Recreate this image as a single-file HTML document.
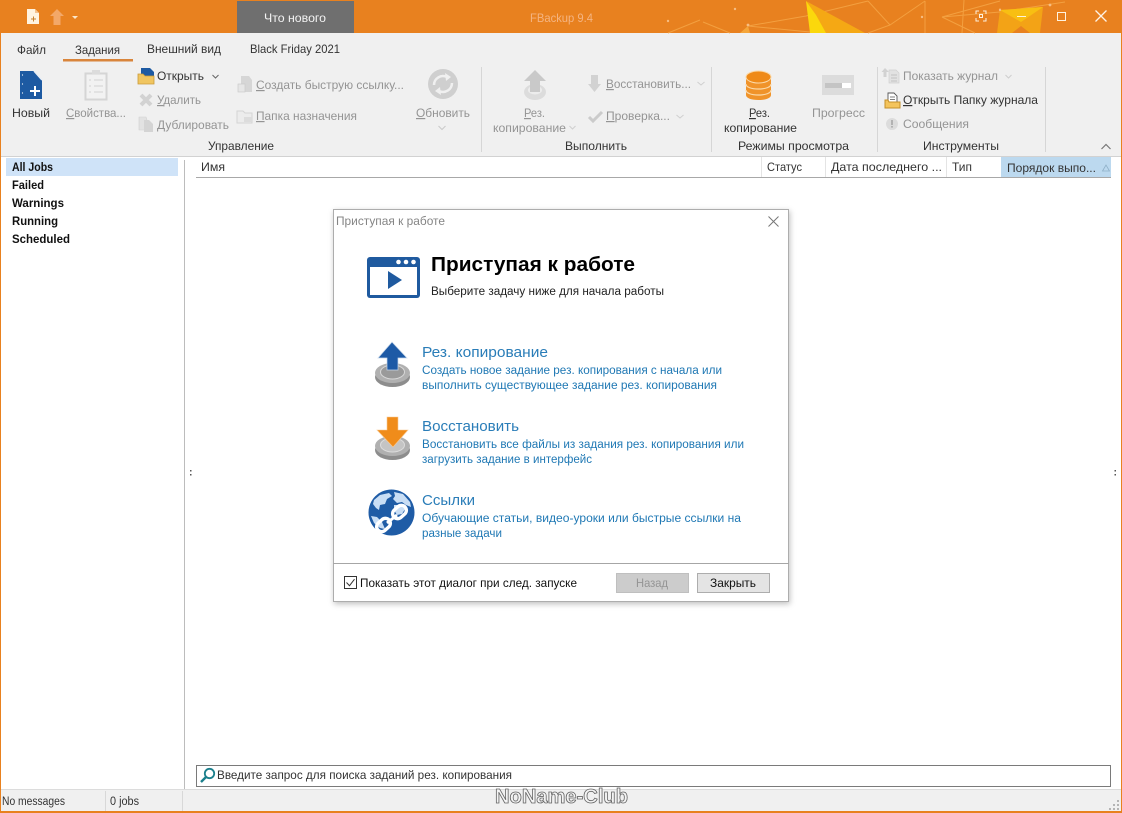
<!DOCTYPE html>
<html lang="ru"><head><meta charset="utf-8"><title>FBackup 9.4</title>
<style>
html,body{margin:0;padding:0;background:#fff;overflow:hidden}
svg{display:block}
text{font-family:"Liberation Sans","Noto Sans CJK SC",sans-serif;font-size:12px;fill:#333;white-space:pre}
.g{fill:#949494}
.b{font-weight:bold;fill:#111}
.l{fill:#1f78b4}
.h{font-size:15px;fill:#2a7db8}
.u{text-decoration:underline}
</style></head><body>
<svg xmlns="http://www.w3.org/2000/svg" width="1122" height="813" viewBox="0 0 1122 813">
<!-- frame -->
<rect width="1122" height="813" fill="#e8811f"/>
<rect x="1" y="33" width="1120" height="778" fill="#fff"/>
<rect x="1" y="33" width="1120" height="124" fill="#f0f0f0"/>
<rect x="1" y="156" width="1120" height="1" fill="#d2d2d2"/>
<!-- titlebar decoration -->
<g fill="none" stroke="#f3a040" stroke-width="1">
<path d="M703 22L730 33M748 26L806 16L868 1M748 26L810 32M868 1L890 25L925 1M890 25L868 33M925 1L925 33M942 17L1000 1M942 17L1000 12L1065 2M942 17L975 33M700 20L668 33M1000 8L1000 33M964 0L962 33"/>
</g>
<polygon points="806,1 814,33 865,33" fill="#f5a814"/>
<polygon points="806,1 810,33 826,33 816,15" fill="#fbd80c"/>
<polygon points="740,33 748,26 750,33" fill="#f5a63a"/>
<polygon points="1000,10 1043,7 1040,33 1030,33 1021,26 1012,33 997,33" fill="#f3a316"/>
<polygon points="1000,10 1043,7 1021,22" fill="#f8bf12"/>
<g fill="#f6bd82"><circle cx="735" cy="9" r="1.200"/><circle cx="748" cy="25" r="1.400"/><circle cx="668" cy="21" r="1.200"/><circle cx="1050" cy="5" r="1.400"/><circle cx="1000" cy="10" r="1.200"/><circle cx="922" cy="17" r="1.200"/></g>
<!-- quick access -->
<path d="M27 9h8l4 4v11h-12z" fill="#fff3e0"/><path d="M35 9v4h4z" fill="#f4c28f"/>
<path d="M31 19h5M33.500 16.500v5" stroke="#c7802f" fill="none"/>
<path d="M57 9l7 7h-3.500v9h-7v-9h-3.500z" fill="#f3a868"/>
<path d="M72 16h6l-3 3z" fill="#fbe6c8"/>
<!-- what's new tab -->
<rect x="237" y="1" width="117" height="32" fill="#6f6f6f"/>
<text x="264" y="22" style="fill:#f4f4f4" textLength="62" lengthAdjust="spacingAndGlyphs">Что нового</text>
<text x="530" y="22" style="fill:#f4b482" textLength="63" lengthAdjust="spacingAndGlyphs">FBackup 9.4</text>
<!-- window controls -->
<path d="M976 14v-3h3M983 11h3v3M986 18v3h-3M979 21h-3v-3" stroke="#fdf0de" fill="none"/>
<rect x="979.500" y="14.500" width="3" height="3" stroke="#fdf0de" fill="none"/>
<path d="M1017 16.500h9" stroke="#fff3dc" fill="none"/>
<rect x="1057.500" y="12.500" width="8" height="8" stroke="#fff3e0" fill="none"/>
<path d="M1095.500 10.500l11 11M1106.500 10.500l-11 11" stroke="#fff3e6" stroke-width="1.300" fill="none"/>
<!-- tabs -->
<text x="17" y="54" textLength="29" lengthAdjust="spacingAndGlyphs">Файл</text>
<text x="75" y="54" textLength="45" lengthAdjust="spacingAndGlyphs">Задания</text>
<rect x="63" y="59" width="70" height="2.500" fill="#d9853b"/>
<text x="147" y="53" textLength="74" lengthAdjust="spacingAndGlyphs">Внешний вид</text>
<text x="250" y="53" textLength="90" lengthAdjust="spacingAndGlyphs">Black Friday 2021</text>
<!-- ribbon separators -->
<g fill="#d6d6d6"><rect x="481" y="67" width="1" height="85"/><rect x="711" y="67" width="1" height="85"/><rect x="877" y="67" width="1" height="85"/><rect x="1045" y="67" width="1" height="85"/></g>
<!-- Новый -->
<path d="M20 71h14l8 9v19h-22z" fill="#1d5aa2"/>
<path d="M34 71l8 9" stroke="#e8eef5" stroke-width="1.500" fill="none"/>
<path d="M30 91h10M35 86v10" stroke="#fff" stroke-width="2" fill="none"/>
<circle cx="22.500" cy="75" r=".6" fill="#fff"/><circle cx="22.500" cy="84" r=".6" fill="#fff"/><circle cx="22.500" cy="93" r=".6" fill="#fff"/>
<text x="12" y="117" textLength="38" lengthAdjust="spacingAndGlyphs">Новый</text>
<!-- Свойства -->
<rect x="85.500" y="73.500" width="21" height="26" fill="#f2f2f2" stroke="#d5d5d5" stroke-width="2"/>
<rect x="92" y="70" width="8" height="4" fill="#dcdcdc"/>
<path d="M89 80h2M94 80h9M89 86h2M94 86h9M89 92h2M94 92h9" stroke="#d2d2d2" fill="none"/>
<text class="g" x="66" y="117" textLength="60" lengthAdjust="spacingAndGlyphs"><tspan class="u">С</tspan>войства...</text>
<!-- Открыть -->
<path d="M141 68h9l4 4v7h-13z" fill="#1d5aa2"/>
<path d="M138 74h5l2 2h9v8h-16z" fill="#f0c560" stroke="#c99a3a" stroke-width=".8"/>
<text x="157" y="80" textLength="47" lengthAdjust="spacingAndGlyphs">Открыть</text>
<path d="M212.500 75l3 3 3-3" stroke="#666" fill="none"/>
<!-- Удалить -->
<path d="M141 95l10 10M151 95l-10 10" stroke="#d2d2d2" stroke-width="4" fill="none"/>
<text class="g" x="157" y="104" textLength="44" lengthAdjust="spacingAndGlyphs"><tspan class="u">У</tspan>далить</text>
<!-- Дублировать -->
<path d="M139 117h7l1 3v10h-8z" fill="#e2e2e2" stroke="#d0d0d0" stroke-width=".6"/>
<path d="M144 120h5l4 4v8h-9z" fill="#d4d4d4"/>
<text class="g" x="157" y="129" textLength="72" lengthAdjust="spacingAndGlyphs">Дублировать</text>
<!-- Создать -->
<path d="M241 76h8l3 4v12h-11z" fill="#d6d6d6"/><rect x="238" y="84" width="7" height="8" fill="#e6e6e6" stroke="#c6c6c6" stroke-width=".6"/>
<text class="g" x="256" y="89" textLength="148" lengthAdjust="spacingAndGlyphs"><tspan class="u">С</tspan>оздать быструю ссылку...</text>
<!-- Папка -->
<path d="M237 111h6l2 2h7v10h-15z" fill="#ececec" stroke="#d4d4d4"/><path d="M244 117h8v5h-8z" fill="#dcdcdc"/>
<text class="g" x="256" y="120" textLength="101" lengthAdjust="spacingAndGlyphs"><tspan class="u">П</tspan>апка назначения</text>
<!-- Обновить -->
<circle cx="443" cy="84" r="15" fill="#cfcfcf"/>
<path d="M434 85a9 9 0 0 1 13-8M452 83a9 9 0 0 1-13 8" stroke="#f0f0f0" stroke-width="2.500" fill="none"/>
<path d="M445 73l6 4-5 4zM441 95l-6-4 5-4z" fill="#f0f0f0"/>
<text class="g" x="416" y="117" textLength="54" lengthAdjust="spacingAndGlyphs"><tspan class="u">О</tspan>бновить</text>
<path d="M438.500 126l3.500 3.500 3.500-3.500" stroke="#c9c9c9" fill="none"/>
<text x="208" y="150" textLength="66" lengthAdjust="spacingAndGlyphs">Управление</text>
<!-- Рез. gray -->
<ellipse cx="535" cy="92" rx="11" ry="8" fill="#dcdcdc"/><ellipse cx="535" cy="90" rx="7" ry="4.500" fill="#ececec"/>
<path d="M535 70l11 11h-6v11h-10v-11h-6z" fill="#c9c9c9"/>
<text class="g" x="524" y="117" textLength="21" lengthAdjust="spacingAndGlyphs"><tspan class="u">Р</tspan>ез.</text>
<text class="g" x="493" y="132" textLength="73" lengthAdjust="spacingAndGlyphs">копирование</text>
<path d="M569.500 126l3 3 3-3" stroke="#cfcfcf" fill="none"/>
<!-- Восстановить -->
<path d="M591 75h7v9h3l-6.500 8-6.500-8h3z" fill="#d2d2d2"/>
<text class="g" x="606" y="88" textLength="85" lengthAdjust="spacingAndGlyphs"><tspan class="u">В</tspan>осстановить...</text>
<path d="M697.500 82l3.500 3 3.500-3" stroke="#cfcfcf" fill="none"/>
<!-- Проверка -->
<path d="M589 117l4 4 9-9" stroke="#cbcbcb" stroke-width="3" fill="none"/>
<text class="g" x="606" y="120" textLength="64" lengthAdjust="spacingAndGlyphs"><tspan class="u">П</tspan>роверка...</text>
<path d="M676.500 115l3.500 3 3.500-3" stroke="#cfcfcf" fill="none"/>
<text x="565" y="150" textLength="62" lengthAdjust="spacingAndGlyphs">Выполнить</text>
<!-- DB -->
<g>
<path d="M746 77v18c0 3 5 5 12.500 5s12.500-2 12.500-5v-18z" fill="#f0932a"/>
<path d="M746 84c0 3 5 5 12.500 5s12.500-2 12.500-5M746 90c0 3 5 5 12.500 5s12.500-2 12.500-5" stroke="#fbd9a8" stroke-width="1.200" fill="none"/>
<ellipse cx="758.500" cy="77" rx="12.500" ry="6" fill="#ef8a18" stroke="#fbd9a8"/>
</g>
<text x="749" y="117" textLength="21" lengthAdjust="spacingAndGlyphs"><tspan class="u">Р</tspan>ез.</text>
<text x="724" y="132" textLength="73" lengthAdjust="spacingAndGlyphs">копирование</text>
<!-- Прогресс -->
<rect x="822" y="75" width="32" height="20" fill="#dcdcdc"/><rect x="825" y="83" width="26" height="5" fill="#fff"/><rect x="825" y="83" width="17" height="5" fill="#c4c4c4"/>
<text class="g" x="812" y="117" textLength="53" lengthAdjust="spacingAndGlyphs">Прогресс</text>
<text x="738" y="150" textLength="111" lengthAdjust="spacingAndGlyphs">Режимы просмотра</text>
<!-- Журнал -->
<path d="M889 70h7l3 3v10h-10z" fill="#e2e2e2" stroke="#d0d0d0" stroke-width=".7"/><path d="M885 68l4 4h-2.500v5h-3v-5h-2z" fill="#d2d2d2"/>
<path d="M891 75h6M891 78h6M891 81h6" stroke="#c2c2c2" fill="none"/>
<text class="g" x="903" y="80" textLength="95" lengthAdjust="spacingAndGlyphs">Показать журнал</text>
<path d="M1005.500 75l3 3 3-3" stroke="#cfcfcf" fill="none"/>
<path d="M888 93h6l3 3v6h-9z" fill="#fff" stroke="#555" stroke-width=".9"/>
<path d="M890 97h5M890 99.500h5" stroke="#555" stroke-width=".7" fill="none"/>
<path d="M885 100h3l1 2h11v6h-15z" fill="#f4c45c" stroke="#c48f2a"/>
<text x="903" y="104" textLength="135" lengthAdjust="spacingAndGlyphs"><tspan class="u">О</tspan>ткрыть Папку журнала</text>
<circle cx="892" cy="124" r="6" fill="#dcdcdc"/><rect x="891.200" y="120" width="1.600" height="5" fill="#a8a8a8"/><rect x="891.200" y="126" width="1.600" height="1.600" fill="#a8a8a8"/>
<text class="g" x="903" y="128" textLength="66" lengthAdjust="spacingAndGlyphs">Сообщения</text>
<text x="923" y="150" textLength="76" lengthAdjust="spacingAndGlyphs">Инструменты</text>
<path d="M1101.500 149l4.500-4.500 4.500 4.500" stroke="#777" stroke-width="1.200" fill="none"/>
<!-- sidebar -->
<rect x="6" y="158" width="172" height="18" fill="#cfe3f8"/>
<text class="b" x="12" y="171" textLength="41" lengthAdjust="spacingAndGlyphs">All Jobs</text>
<text class="b" x="12" y="189" textLength="32" lengthAdjust="spacingAndGlyphs">Failed</text>
<text class="b" x="12" y="207" textLength="52" lengthAdjust="spacingAndGlyphs">Warnings</text>
<text class="b" x="12" y="225" textLength="46" lengthAdjust="spacingAndGlyphs">Running</text>
<text class="b" x="12" y="243" textLength="58" lengthAdjust="spacingAndGlyphs">Scheduled</text>
<rect x="184" y="160" width="1" height="630" fill="#bcbcbc"/>
<g fill="#555"><rect x="190" y="470" width="1.500" height="1.500"/><rect x="190" y="474" width="1.500" height="1.500"/><rect x="1114.500" y="470" width="1.500" height="1.500"/><rect x="1114.500" y="474" width="1.500" height="1.500"/></g>
<!-- list header -->
<rect x="1001" y="157" width="110" height="20" fill="#bcd9ef"/>
<rect x="196" y="177" width="915" height="1" fill="#a8a8a8"/>
<g fill="#e4e4e4"><rect x="761" y="157" width="1" height="20"/><rect x="825" y="157" width="1" height="20"/><rect x="946" y="157" width="1" height="20"/></g>
<text x="201" y="171" textLength="24" lengthAdjust="spacingAndGlyphs">Имя</text>
<text x="767" y="171" textLength="35" lengthAdjust="spacingAndGlyphs">Статус</text>
<text x="831" y="171" textLength="111" lengthAdjust="spacingAndGlyphs">Дата последнего ...</text>
<text x="952" y="171" textLength="20" lengthAdjust="spacingAndGlyphs">Тип</text>
<text x="1007" y="172" textLength="89" lengthAdjust="spacingAndGlyphs">Порядок выпо...</text>
<path d="M1104.500 171l3.500-6 3.500 6z" fill="none" stroke="#8fb0c8" stroke-width=".8" transform="translate(-2 0)"/>
<!-- dialog -->
<defs><filter id="s" x="-5%" y="-5%" width="110%" height="110%"><feDropShadow dx="1" dy="2" stdDeviation="3" flood-color="#000" flood-opacity=".25"/></filter></defs>
<rect x="333" y="209" width="456" height="393" fill="#fff" filter="url(#s)"/>
<rect x="333.500" y="209.500" width="455" height="392" fill="#fff" stroke="#adadad"/>
<text x="336" y="225" style="fill:#858585" textLength="109" lengthAdjust="spacingAndGlyphs">Приступая к работе</text>
<path d="M768.500 216.500l10 10M778.500 216.500l-10 10" stroke="#777" fill="none"/>
<!-- window icon -->
<rect x="367" y="257" width="53" height="41" rx="3" fill="#1f5a9f"/>
<rect x="370" y="267" width="47" height="28" fill="#fff"/>
<polygon points="388,271 402,280 388,289" fill="#1f5a9f"/>
<circle cx="398.500" cy="262" r="2.300" fill="#fff"/><circle cx="406" cy="262" r="2.300" fill="#fff"/><circle cx="413.500" cy="262" r="2.300" fill="#fff"/>
<text x="431" y="271" style="font-size:20px;font-weight:bold;fill:#000" textLength="204" lengthAdjust="spacingAndGlyphs">Приступая к работе</text>
<text x="431" y="295" style="font-size:11.500px;fill:#222" textLength="233" lengthAdjust="spacingAndGlyphs">Выберите задачу ниже для начала работы</text>
<!-- backup row -->
<ellipse cx="392.500" cy="377" rx="17.500" ry="10" fill="#8d8d8d"/>
<ellipse cx="392.500" cy="373" rx="17.500" ry="10" fill="#b0b0b0"/>
<ellipse cx="392.500" cy="372" rx="12" ry="7" fill="#9a9a9a" stroke="#d8d8d8"/>
<path d="M392 342l15 16h-9v12h-11v-12h-9z" fill="#1d5aa6" stroke="#c8d8ea" stroke-width=".7"/>
<text class="h" x="422" y="357" textLength="126" lengthAdjust="spacingAndGlyphs">Рез. копирование</text>
<text class="l" x="422" y="374" style="font-size:11.500px" textLength="300" lengthAdjust="spacingAndGlyphs">Создать новое задание рез. копирования с начала или</text>
<text class="l" x="422" y="389" style="font-size:11.500px" textLength="295" lengthAdjust="spacingAndGlyphs">выполнить существующее задание рез. копирования</text>
<!-- restore row -->
<ellipse cx="392.500" cy="450" rx="17.500" ry="10" fill="#8d8d8d"/>
<ellipse cx="392.500" cy="446" rx="17.500" ry="10" fill="#b0b0b0"/>
<ellipse cx="392.500" cy="445" rx="12" ry="7" fill="#c4c4c4" stroke="#dcdcdc"/>
<path d="M387 417h11v13h10l-15 17-16-17h10z" fill="#f08c1a" stroke="#f8c890" stroke-width=".6"/>
<text class="h" x="422" y="431" textLength="97" lengthAdjust="spacingAndGlyphs">Восстановить</text>
<text class="l" x="422" y="448" style="font-size:11.500px" textLength="322" lengthAdjust="spacingAndGlyphs">Восстановить все файлы из задания рез. копирования или</text>
<text class="l" x="422" y="463" style="font-size:11.500px" textLength="170" lengthAdjust="spacingAndGlyphs">загрузить задание в интерфейс</text>
<!-- links row -->
<circle cx="391.500" cy="512.500" r="23" fill="#1f5ca6"/>
<path d="M374 500l6-5 9-2 3 3-5 3-2 5-5 1-1 5-3-2-3-4zM394 492l9 2 7 8 1 5-5-2-4-3-5 1-4-4 2-3zM394 505l7 0 4 4-3 5-5 1-3-5zM371 516l6 1 5 5 3 7-5-1-6-5z" fill="#c9def5"/>
<g fill="none" stroke="#fff" stroke-width="3.400">
<rect x="376" y="520" width="15" height="10" rx="5" transform="rotate(-42 383.500 525)"/>
<rect x="392" y="507" width="15" height="10" rx="5" transform="rotate(-42 399.500 512)"/>
</g>
<path d="M387 523l10-8" stroke="#fff" stroke-width="3" fill="none"/>
<text class="h" x="422" y="505" textLength="53" lengthAdjust="spacingAndGlyphs">Ссылки</text>
<text class="l" x="422" y="522" style="font-size:11.500px" textLength="319" lengthAdjust="spacingAndGlyphs">Обучающие статьи, видео-уроки или быстрые ссылки на</text>
<text class="l" x="422" y="537" style="font-size:11.500px" textLength="80" lengthAdjust="spacingAndGlyphs">разные задачи</text>
<!-- dialog footer -->
<rect x="333" y="563" width="456" height="1" fill="#a6a6a6"/>
<rect x="344.500" y="576.500" width="12" height="12" fill="#fff" stroke="#333"/>
<path d="M346.500 582.500l3 3.200 5-6.500" stroke="#333" fill="none"/>
<text x="360" y="587" style="fill:#111" textLength="217" lengthAdjust="spacingAndGlyphs">Показать этот диалог при след. запуске</text>
<rect x="616.500" y="573.500" width="72" height="19" fill="#cccccc" stroke="#bfbfbf"/>
<text x="636" y="587" class="g" textLength="32" lengthAdjust="spacingAndGlyphs">Назад</text>
<rect x="697.500" y="573.500" width="72" height="19" fill="#e4e4e4" stroke="#adadad"/>
<text x="710" y="587" style="fill:#111" textLength="46" lengthAdjust="spacingAndGlyphs">Закрыть</text>
<!-- search -->
<rect x="196.500" y="765.500" width="914" height="21" fill="#fff" stroke="#7a7a7a"/>
<circle cx="209.500" cy="773.500" r="4.700" fill="none" stroke="#1b7f8c" stroke-width="1.800"/>
<path d="M206 777l-5 5" stroke="#1b7f8c" stroke-width="2.400" fill="none"/>
<text x="217" y="779" textLength="295" lengthAdjust="spacingAndGlyphs">Введите запрос для поиска заданий рез. копирования</text>
<!-- status bar -->
<rect x="1" y="790" width="1120" height="21" fill="#f0f0f0"/>
<rect x="1" y="789" width="1120" height="1" fill="#dcdcdc"/>
<rect x="105" y="791" width="1" height="20" fill="#d8d8d8"/>
<rect x="182" y="791" width="1" height="20" fill="#d8d8d8"/>
<text x="2" y="805" style="font-size:11.500px" textLength="63" lengthAdjust="spacingAndGlyphs">No messages</text>
<text x="110" y="805" style="font-size:11.500px" textLength="29" lengthAdjust="spacingAndGlyphs">0 jobs</text>
<g fill="#b4b4b4"><rect x="1117" y="800" width="2" height="2"/><rect x="1113" y="804" width="2" height="2"/><rect x="1117" y="804" width="2" height="2"/><rect x="1109" y="808" width="2" height="2"/><rect x="1113" y="808" width="2" height="2"/><rect x="1117" y="808" width="2" height="2"/></g>
<!-- watermark -->
<text x="495" y="803" style="font-size:20px;font-weight:bold;fill:#f4f4f4;stroke:#666;stroke-width:.8px" textLength="133" lengthAdjust="spacingAndGlyphs">NoName-Club</text>
</svg>
</body></html>
